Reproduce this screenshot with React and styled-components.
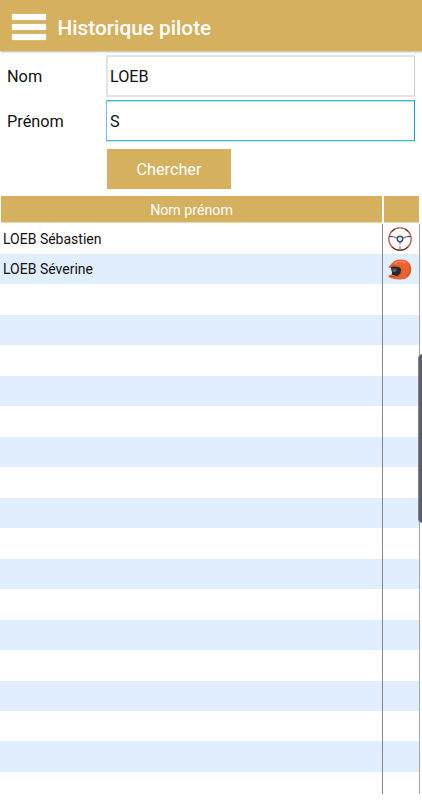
import React, { useState } from 'react';
import styled, { createGlobalStyle, ThemeProvider } from 'styled-components';
import { clsx } from 'clsx';

const theme = {
  colors: {
    gold: '#d5b05f',
    goldEdge: '#ead8ad',
    white: '#ffffff',
    black: '#111111',
    stripe: '#e0eefd',
    line: '#858585',
    focus: '#4fb4dc',
  },
};

const GlobalStyle = createGlobalStyle`
  *, *::before, *::after {
    box-sizing: border-box;
  }
  body {
    margin: 0;
    background: #fff;
    font-family: Roboto, 'Liberation Sans', sans-serif;
    overflow: hidden;
  }
`;

const Page = styled.div`
  position: relative;
  display: flex;
  flex-direction: column;
  width: 422px;
  height: 800px;
  background-color: ${({ theme }) => theme.colors.white};
  color: ${({ theme }) => theme.colors.black};
  overflow: hidden;
`;
const TopBar = styled.header`
  display: flex;
  align-items: center;
  flex: none;
  height: 51px;
  padding: 3px 12px 0;
  background-color: ${({ theme }) => theme.colors.gold};
  box-shadow: 0 1px 2px rgba(0, 0, 0, 0.3);
`;
const MenuButton = styled.button`
  display: flex;
  flex-direction: column;
  gap: 4px;
  width: 34px;
  padding: 0;
  border: 0;
  background: none;
`;
const MenuBar = styled.span`
  height: 6px;
  background-color: ${({ theme }) => theme.colors.white};
  box-shadow: 0 0 1px rgba(255, 255, 255, 0.6);
`;
const Title = styled.h1`
  margin: 2px 0 0 11.5px;
  color: ${({ theme }) => theme.colors.white};
  font-size: 20.8px;
  font-weight: 500;
  line-height: 24px;
  white-space: nowrap;
`;
const Form = styled.form`
  display: grid;
  grid-template-columns: 99px 309px;
  grid-template-rows: 42px 41px 40px;
  row-gap: 3px;
  flex: none;
  height: 145px;
  padding: 4px 0 0 7px;
`;
const Label = styled.label`
  font-size: 16.3px;
  line-height: 43px;
`;
const Input = styled.input`
  width: 309px;
  height: 42px;
  padding: 1px 3px 0 2px;
  border: 2px solid #e3e3e3;
  border-right: 1px solid #cbcbcb;
  border-radius: 0;
  outline: none;
  background-color: ${({ theme }) => theme.colors.white};
  color: ${({ theme }) => theme.colors.black};
  font: 16.2px Roboto, sans-serif;

  &.active {
    height: 41px;
    padding: 2px 3px 0;
    border: 1px solid ${({ theme }) => theme.colors.focus};
    border-left-color: #72bde8;
    border-right-color: #109ce0;
    box-shadow: inset 0 1px #b3dcf1, 0 1px #c5e4f4;
  }
`;
const SearchButton = styled.button`
  grid-column: 2;
  width: 124px;
  height: 40px;
  margin: 5px 0 0 1px;
  padding: 0;
  border: 0;
  background-color: ${({ theme }) => theme.colors.gold};
  color: ${({ theme }) => theme.colors.white};
  font: 16.2px Roboto, sans-serif;
`;
const TableHead = styled.div`
  display: grid;
  grid-template-columns: 381px 35px;
  column-gap: 2px;
  flex: none;
  height: 27px;
  padding-left: 1px;
`;
const HeadCell = styled.div`
  height: 27px;
  border-bottom: 1px solid ${({ theme }) => theme.colors.goldEdge};
  background-color: ${({ theme }) => theme.colors.gold};
  color: ${({ theme }) => theme.colors.white};
  font-size: 14.2px;
  line-height: 28px;
  text-align: center;
`;
const TableBody = styled.div`
  flex: none;
  height: 571px;
  padding-top: 0.5px;
  width: 420px;
  overflow: hidden;
`;
const Row = styled.div`
  display: grid;
  grid-template-columns: 383px 37px;
  height: 30.48px;
  background-color: ${({ theme }) => theme.colors.white};

  &.odd {
    background-color: ${({ theme }) => theme.colors.stripe};
  }
`;
const NameCell = styled.div`
  padding-left: 3px;
  border-right: 1px solid ${({ theme }) => theme.colors.line};
  font-size: 14px;
  line-height: 30px;
`;
const IconCell = styled.div`
  display: flex;
  align-items: center;
  justify-content: center;
  padding-right: 2px;
  border-right: 1px solid #a5a5a5;
`;
const ScrollThumb = styled.div`
  position: absolute;
  top: 354px;
  right: -4px;
  width: 8px;
  height: 169px;
  border: 1px solid #85858f;
  border-radius: 4px;
  background-color: #5d5d6c;
`;

const SteeringWheel = () => (
  <svg width="26" height="26" viewBox="0 0 26 26" fill="none">
    <circle cx="13" cy="13" r="11.2" stroke="#b9604f" strokeWidth="1.3" />
    <path d="M4.500 6A11.200 11.200 0 0 1 8 3M18 3a11.200 11.200 0 0 1 3.500 3M5 20.800a11.200 11.200 0 0 0 16 0" stroke="#6b2d20" strokeWidth="1.100" />
    <path d="M2.300 10.500 6 10.700 10.300 12.200M23.700 10.500 20 10.700 15.700 12.200" stroke="#7c8198" strokeWidth="1.300" />
    <path d="M2.500 10.400h3M20.500 10.400h3" stroke="#3f4455" strokeWidth="1" />
    <path d="M13 16v2.500M13 20v3.500" stroke="#777b86" strokeWidth="1.100" />
    <circle cx="13" cy="13" r="2.700" fill="#fff" stroke="#454853" strokeWidth="1.400" />
    <circle cx="13" cy="13" r="0.800" fill="#d2d4da" />
  </svg>
);

const Helmet = () => (
  <svg width="26" height="22" viewBox="0 -0.7 26 22">
    <path d="M3.500 6.500C6 2.300 9.500 .8 14 .8c6.500 0 10.300 4 10.300 9.300 0 3.800-1.200 6.500-3.300 8.100-1.800 1.800-5.500 2.700-9 2.500-3.800 0-7.600-.8-9.800-1.900-1-.6-.8-2 .2-2.500l3.200-.4L4.800 9.500 1.500 8.700Z" fill="#ed6330" />
    <path d="M3.800 8.300c3-.8 6.500-.5 9 .4l1.400 1.800-1.100 4.500-2.900 2.600-3.700-1.200-1.800-.4L5 14Z" fill="#25282c" />
    <path d="m5.300 10 3.600-.2 1 1.100-1.200 2.300-3 .2Z" fill="#555c64" />
    <path d="M2 8C6 5.800 10 6 14.800 8.800" fill="none" stroke="#d9582a" strokeWidth="0.900" />
    <path d="M7.500 5C10.500 2.600 15 2.300 18.500 4.200" fill="none" stroke="#fa905d" strokeWidth="1.300" />
    <path d="M15 10c.3 3-1.200 6.500-4 8.500M3 17.700l5.800.7" fill="none" stroke="#c94a20" strokeWidth="0.800" />
    <path d="M22.500 8.500c.8 3.500-.2 7-3 8.500" fill="none" stroke="#da4f20" strokeWidth="1.200" />
  </svg>
);

const pilots = [
  { id: 1, nom: 'LOEB Sébastien', icon: <SteeringWheel /> },
  { id: 2, nom: 'LOEB Séverine', icon: <Helmet /> },
];
const ROW_COUNT = 19;

const App = () => {
  const [nom, setNom] = useState('LOEB');
  const [prenom, setPrenom] = useState('S');
  const rows = Array.from({ length: ROW_COUNT }, (_, i) => pilots[i] || {});

  return (
    <ThemeProvider theme={theme}>
      <GlobalStyle />
      <Page>
        <TopBar>
          <MenuButton type="button">
            <MenuBar />
            <MenuBar />
            <MenuBar />
          </MenuButton>
          <Title>Historique pilote</Title>
        </TopBar>
        <Form onSubmit={(e) => e.preventDefault()}>
          <Label htmlFor="nom">Nom</Label>
          <Input id="nom" value={nom} onChange={(e) => setNom(e.target.value)} />
          <Label htmlFor="prenom">Prénom</Label>
          <Input
            id="prenom"
            className="active"
            value={prenom}
            onChange={(e) => setPrenom(e.target.value)}
          />
          <SearchButton>Chercher</SearchButton>
        </Form>
        <TableHead>
          <HeadCell>Nom prénom</HeadCell>
          <HeadCell />
        </TableHead>
        <TableBody>
          {rows.map((row, i) => (
            <Row key={row.id || `empty-${i}`} className={clsx({ odd: i % 2 === 1 })}>
              <NameCell>{row.nom}</NameCell>
              <IconCell>{row.icon}</IconCell>
            </Row>
          ))}
        </TableBody>
        <ScrollThumb />
      </Page>
    </ThemeProvider>
  );
};

export default App;
